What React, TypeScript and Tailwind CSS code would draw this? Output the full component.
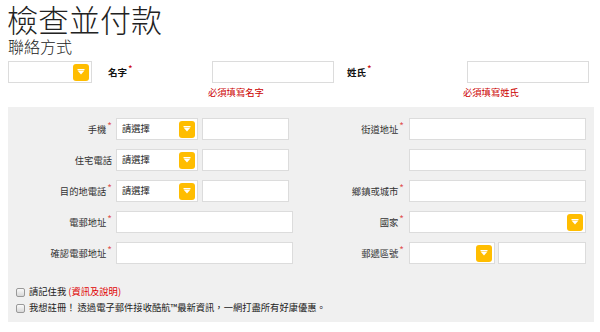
import React from "react";

const FONT = "font-['Noto_Sans_CJK_TC','Noto_Sans_CJK_SC',sans-serif]";

function Btn() {
  return (
    <div className="w-[16px] h-[17px] mr-[2px] rounded-[3px] bg-[#ffbd00] flex items-center justify-center shrink-0">
      <svg width="8" height="6" viewBox="0 0 8 6">
        <rect x="0.5" y="0" width="7" height="1" fill="#fff" />
        <polygon points="0.5,1.5 7.5,1.5 4,5.5" fill="#fff" />
      </svg>
    </div>
  );
}

function Select({ w, text }: { w: string; text?: string }) {
  return (
    <div className={`${w} h-[22px] bg-white border border-[#dcdcdc] flex items-center justify-between shrink-0`}>
      <span className="pl-[5px] text-[9.3px] text-[#222]">{text ?? ""}</span>
      <Btn />
    </div>
  );
}

function Input({ w }: { w: string }) {
  return <div className={`${w} h-[22px] bg-white border border-[#dcdcdc] shrink-0`} />;
}

function Label({ text, req }: { text: string; req?: boolean }) {
  return (
    <div className="w-[104px] shrink-0 text-right text-[9.3px] text-[#333] leading-[22px]">
      {text}
      {req && <span className="text-[#e05555] text-[10px] relative top-[-3px] ml-[1px]">*</span>}
    </div>
  );
}

function Check({ children }: { children: React.ReactNode }) {
  return (
    <div className="h-[16px] flex items-center">
      <div className="w-[9px] h-[9px] rounded-[2px] border border-[#999] bg-gradient-to-b from-[#fafafa] to-[#d8d8d8] shrink-0" />
      <div className="ml-[4px] text-[9.3px] text-[#222] whitespace-nowrap">{children}</div>
    </div>
  );
}

export default function App() {
  return (
    <div className={`w-[600px] h-[332px] bg-white overflow-hidden ${FONT}`}>
      <h1 className="ml-[7px] text-[31px] leading-[37px] font-light text-[#222]">檢查並付款</h1>
      <h2 className="ml-[8px] text-[16px] leading-[19px] font-light text-[#222]">聯絡方式</h2>
      <div className="flex items-start ml-[8px] mt-[5px]">
        <Select w="w-[84px]" />
        <div className="ml-[16px] w-[104px] text-[9.5px] font-bold text-[#111] leading-[22px]">
          名字<span className="text-[#cc0000] text-[10px] relative top-[-3px] font-normal ml-[1px]">*</span>
        </div>
        <div className="flex flex-col">
          <Input w="w-[122px]" />
          <div className="ml-[-4px] mt-[3px] text-[9.3px] text-[#cc0000] leading-[12px]">必須填寫名字</div>
        </div>
        <div className="ml-[13px] w-[120px] text-[9.5px] font-bold text-[#111] leading-[22px]">
          姓氏<span className="text-[#cc0000] text-[10px] relative top-[-3px] font-normal ml-[1px]">*</span>
        </div>
        <div className="flex flex-col">
          <Input w="w-[122px]" />
          <div className="ml-[-4px] mt-[3px] text-[9.3px] text-[#cc0000] leading-[12px]">必須填寫姓氏</div>
        </div>
      </div>
      <div className="ml-[8px] mt-[9px] w-[586px] h-[215px] bg-[#f0f0f0] pt-[11px]">
        <div className="flex">
          <div className="w-[292px] flex flex-col gap-[9px]">
            <div className="flex">
              <Label text="手機" req />
              <div className="ml-[4px] flex gap-[4px]">
                <Select w="w-[82px]" text="請選擇" />
                <Input w="w-[87px]" />
              </div>
            </div>
            <div className="flex">
              <Label text="住宅電話" />
              <div className="ml-[4px] flex gap-[4px]">
                <Select w="w-[82px]" text="請選擇" />
                <Input w="w-[87px]" />
              </div>
            </div>
            <div className="flex">
              <Label text="目的地電話" req />
              <div className="ml-[4px] flex gap-[4px]">
                <Select w="w-[82px]" text="請選擇" />
                <Input w="w-[87px]" />
              </div>
            </div>
            <div className="flex">
              <Label text="電郵地址" req />
              <div className="ml-[4px]">
                <Input w="w-[177px]" />
              </div>
            </div>
            <div className="flex">
              <Label text="確認電郵地址" req />
              <div className="ml-[4px]">
                <Input w="w-[177px]" />
              </div>
            </div>
          </div>
          <div className="flex-1 flex flex-col gap-[9px]">
            <div className="flex">
              <Label text="街道地址" req />
              <div className="ml-[5px]">
                <Input w="w-[177px]" />
              </div>
            </div>
            <div className="flex">
              <Label text="" />
              <div className="ml-[5px]">
                <Input w="w-[177px]" />
              </div>
            </div>
            <div className="flex">
              <Label text="鄉鎮或城市" req />
              <div className="ml-[5px]">
                <Input w="w-[177px]" />
              </div>
            </div>
            <div className="flex">
              <Label text="國家" req />
              <div className="ml-[5px]">
                <Select w="w-[177px]" />
              </div>
            </div>
            <div className="flex">
              <Label text="郵遞區號" req />
              <div className="ml-[5px] flex gap-[3px]">
                <Select w="w-[86px]" />
                <Input w="w-[88px]" />
              </div>
            </div>
          </div>
        </div>
        <div className="mt-[20px] pl-[8px]">
          <Check>
            請記住我 <span className="text-[#e00000]">(資訊及說明)</span>
          </Check>
          <Check>我想註冊！ 透過電子郵件接收酷航™最新資訊，一網打盡所有好康優惠。</Check>
        </div>
      </div>
    </div>
  );
}
